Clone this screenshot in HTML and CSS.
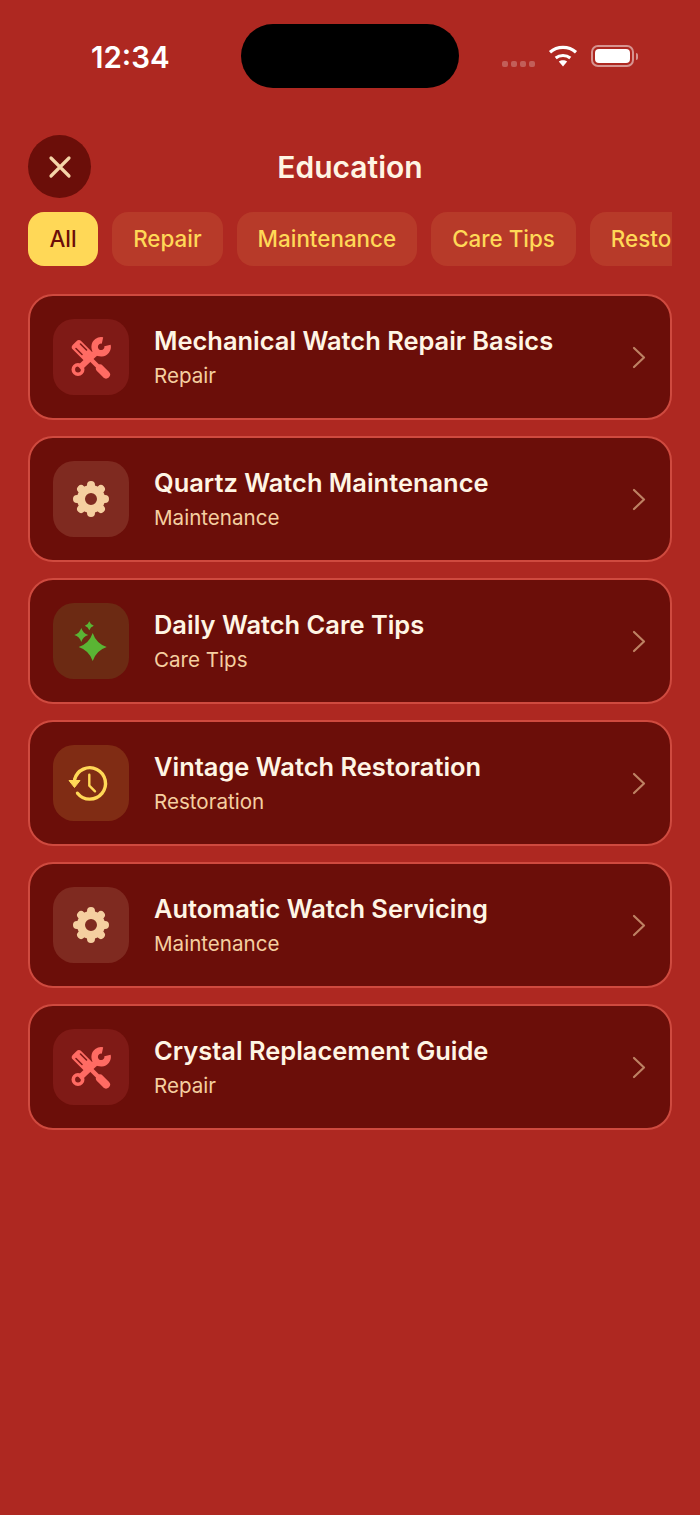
FILE: index.html
```html
<!DOCTYPE html>
<html>
<head>
    <title>Education</title>
    <meta name="viewport" content="width=device-width, initial-scale=1">
    <link rel="stylesheet" href="styles.css">
</head>
<body>
    <svg class="sprite" width="0" height="0">
        <symbol id="icon-repair" viewBox="0 0 48 48">
            <rect x="4.500" y="11.500" width="21.500" height="12" rx="3.500" transform="rotate(45 15.250 17.500)" fill="currentColor"/>
            <path d="M9 15.500L15 21.500M13.500 11L19.500 17" stroke="var(--slit)" stroke-width="1.600" stroke-linecap="round" fill="none"/>
            <path d="M21.500 24L34.500 37" stroke="currentColor" stroke-width="4.500" fill="none"/>
            <path d="M33 35.500L39 41.500" stroke="currentColor" stroke-width="8" stroke-linecap="round" fill="none"/>
            <path d="M29 19.500L12.500 35" stroke="currentColor" stroke-width="6" fill="none"/>
            <path d="M35.500 7.500A6.500 6.500 0 1 0 40.500 12.500" stroke="currentColor" stroke-width="6.500" fill="none"/>
            <circle cx="11" cy="36.500" r="4.700" fill="none" stroke="currentColor" stroke-width="3.600"/>
        </symbol>
        <symbol id="icon-gear" viewBox="0 0 48 48">
            <path d="M24 12V10M24 36V38M12 24H10M36 24H38M15.500 15.500L14.100 14.100M32.500 32.500L33.900 33.900M32.500 15.500L33.900 14.100M15.500 32.500L14.100 33.900" stroke="currentColor" stroke-width="8" stroke-linecap="round"/>
            <circle cx="24" cy="24" r="10" fill="none" stroke="currentColor" stroke-width="8"/>
        </symbol>
        <symbol id="icon-sparkle" viewBox="0 0 48 48">
            <path d="M25.700 16Q29.200 26.500 39.700 30Q29.200 33.500 25.700 44Q22.200 33.500 11.700 30Q22.200 26.500 25.700 16Z" fill="currentColor"/>
            <path d="M14.300 11Q16 16.300 21.300 18Q16 19.700 14.300 25Q12.600 19.700 7.300 18Q12.600 16.300 14.300 11Z" fill="currentColor"/>
            <path d="M22.300 4.200Q23.400 7.600 26.800 8.700Q23.400 9.800 22.300 13.200Q21.200 9.800 17.800 8.700Q21.200 7.600 22.300 4.200Z" fill="currentColor"/>
        </symbol>
        <symbol id="icon-history" viewBox="0 0 48 48">
            <path d="M10.500 34.200A15.700 15.700 0 1 0 7.600 20.500" fill="none" stroke="currentColor" stroke-width="3.400" stroke-linecap="round"/>
            <path d="M2 21.500H13L7.500 28.500Z" fill="currentColor" stroke="currentColor" stroke-linejoin="round"/>
            <path d="M22.300 15.700V26.700L28 32.300" fill="none" stroke="currentColor" stroke-width="2.400" stroke-linecap="round" stroke-linejoin="round"/>
        </symbol>
        <symbol id="icon-chevron" viewBox="0 0 16 24">
            <path d="M3 3L13 12.500L3 22" fill="none" stroke="currentColor" stroke-width="2.200" stroke-linecap="round" stroke-linejoin="round"/>
        </symbol>
    </svg>

    <div class="status-bar">
        <div class="status-time">12:34</div>
        <div class="island"></div>
        <div class="status-icons">
            <div class="signal-dots"><span></span><span></span><span></span><span></span></div>
            <svg class="wifi" width="30" height="22" viewBox="0 0 30 22">
                <path d="M15 21.500L10.800 16.600C13.200 14.700 16.800 14.700 19.200 16.600Z" fill="#fff"/>
                <path d="M7.700 13C11.800 9.500 18.200 9.500 22.300 13" fill="none" stroke="#fff" stroke-width="3"/>
                <path d="M2 7.200C9.400 0.700 20.600 0.700 28 7.200" fill="none" stroke="#fff" stroke-width="3.200"/>
            </svg>
            <div class="battery"><div class="battery-level"></div></div>
            <div class="battery-tip"></div>
        </div>
    </div>

    <div class="page-header">
        <button class="close-btn">
            <svg width="26" height="26" viewBox="0 0 26 26">
                <path d="M4 4L22 22M22 4L4 22" stroke="#f5d5a8" stroke-width="3.200" stroke-linecap="round"/>
            </svg>
        </button>
        <h1>Education</h1>
    </div>

    <div class="filter-row">
        <div class="chip active">All</div>
        <div class="chip">Repair</div>
        <div class="chip">Maintenance</div>
        <div class="chip">Care Tips</div>
        <div class="chip">Restoration</div>
    </div>

    <div class="guide-list">
        <div class="guide-card">
            <div class="guide-icon repair"><svg width="48" height="48"><use href="#icon-repair"/></svg></div>
            <div class="guide-text">
                <div class="guide-title">Mechanical Watch Repair Basics</div>
                <div class="guide-cat">Repair</div>
            </div>
            <svg class="chevron" width="16" height="24"><use href="#icon-chevron"/></svg>
        </div>
        <div class="guide-card">
            <div class="guide-icon maintenance"><svg width="48" height="48"><use href="#icon-gear"/></svg></div>
            <div class="guide-text">
                <div class="guide-title">Quartz Watch Maintenance</div>
                <div class="guide-cat">Maintenance</div>
            </div>
            <svg class="chevron" width="16" height="24"><use href="#icon-chevron"/></svg>
        </div>
        <div class="guide-card">
            <div class="guide-icon care"><svg width="48" height="48"><use href="#icon-sparkle"/></svg></div>
            <div class="guide-text">
                <div class="guide-title">Daily Watch Care Tips</div>
                <div class="guide-cat">Care Tips</div>
            </div>
            <svg class="chevron" width="16" height="24"><use href="#icon-chevron"/></svg>
        </div>
        <div class="guide-card">
            <div class="guide-icon restoration"><svg width="48" height="48"><use href="#icon-history"/></svg></div>
            <div class="guide-text">
                <div class="guide-title">Vintage Watch Restoration</div>
                <div class="guide-cat">Restoration</div>
            </div>
            <svg class="chevron" width="16" height="24"><use href="#icon-chevron"/></svg>
        </div>
        <div class="guide-card">
            <div class="guide-icon maintenance"><svg width="48" height="48"><use href="#icon-gear"/></svg></div>
            <div class="guide-text">
                <div class="guide-title">Automatic Watch Servicing</div>
                <div class="guide-cat">Maintenance</div>
            </div>
            <svg class="chevron" width="16" height="24"><use href="#icon-chevron"/></svg>
        </div>
        <div class="guide-card">
            <div class="guide-icon repair"><svg width="48" height="48"><use href="#icon-repair"/></svg></div>
            <div class="guide-text">
                <div class="guide-title">Crystal Replacement Guide</div>
                <div class="guide-cat">Repair</div>
            </div>
            <svg class="chevron" width="16" height="24"><use href="#icon-chevron"/></svg>
        </div>
    </div>
</body>
</html>
```

FILE: styles.css
```css
body {
    margin: 0;
    height: 1515px;
    overflow: hidden;
    background: #ae2821;
    font-family: 'Inter', 'Liberation Sans', sans-serif;
    color: #fff5e4;
}

.sprite {
    position: absolute;
}

.status-bar {
    position: relative;
    display: flex;
    justify-content: space-between;
    height: 135px;
    padding: 0 62px 0 91px;
    box-sizing: border-box;
}

.status-time {
    margin-top: 39px;
    font-size: 29.500px;
    line-height: 36px;
    font-weight: 600;
    color: #fff;
}

.island {
    position: absolute;
    top: 24px;
    left: 241px;
    width: 218px;
    height: 64px;
    border-radius: 32px;
    background: #000;
}

.status-icons {
    display: flex;
    align-items: flex-start;
    padding-top: 45px;
}

.signal-dots {
    display: flex;
    gap: 3px;
    margin: 16px 13px 0 0;
}

.signal-dots span {
    width: 6px;
    height: 6px;
    border-radius: 2px;
    background: rgba(255,255,255,0.25);
}

.wifi {
    margin-right: 13px;
}

.battery {
    width: 43px;
    height: 22px;
    padding: 2px;
    box-sizing: border-box;
    border: 2px solid rgba(255,255,255,0.5);
    border-radius: 7px;
}

.battery-level {
    height: 100%;
    background: #fff;
    border-radius: 4px;
}

.battery-tip {
    width: 2px;
    height: 7px;
    margin: 8px 0 0 2px;
    background: rgba(255,255,255,0.5);
    border-radius: 0 2px 2px 0;
}

.page-header {
    display: grid;
    grid-template-columns: 63px 1fr 63px;
    align-items: center;
    margin: 0 28px;
}

.page-header h1 {
    margin: 0;
    font-size: 30px;
    font-weight: 600;
    text-align: center;
}

.close-btn {
    display: flex;
    align-items: center;
    justify-content: center;
    width: 63px;
    height: 63px;
    padding: 0;
    border: none;
    border-radius: 50%;
    background: #6b0e09;
}

.filter-row {
    display: flex;
    gap: 14px;
    margin: 14px 28px 0;
    overflow: hidden;
}

.chip {
    flex: 0 0 auto;
    padding: 0 21px;
    height: 54px;
    line-height: 54px;
    font-size: 22.400px;
    font-weight: 500;
    color: #ffd857;
    background: #b73a29;
    border-radius: 16px;
}

.chip.active {
    padding: 0 21.500px;
    color: #6b0e09;
    background: #ffd857;
}

.guide-list {
    display: flex;
    flex-direction: column;
    gap: 16px;
    margin: 28px 28px 0;
}

.guide-card {
    display: flex;
    align-items: center;
    padding: 23px;
    background: #6b0e09;
    border: 2px solid #cf4a3f;
    border-radius: 25px;
}

.guide-icon {
    display: flex;
    align-items: center;
    justify-content: center;
    flex: 0 0 76px;
    height: 76px;
    border-radius: 21px;
}

.guide-icon.repair {
    color: #ff6b63;
    background: #7f1a16;
    --slit: #7f1a16;
}

.guide-icon.maintenance {
    color: #f5cfa0;
    background: #7f2a20;
}

.guide-icon.care {
    color: #5ab534;
    background: #6c2a13;
}

.guide-icon.restoration {
    color: #ffd857;
    background: #802c14;
}

.guide-text {
    flex: 1;
    margin-left: 25px;
}

.guide-title {
    margin-top: -1.500px;
    font-size: 25.450px;
    line-height: 32px;
    font-weight: 600;
}

.guide-cat {
    margin-top: 7.500px;
    font-size: 20.600px;
    line-height: 24px;
    color: #f5cfa0;
}

.chevron {
    color: rgba(245,207,160,0.6);
}
```
